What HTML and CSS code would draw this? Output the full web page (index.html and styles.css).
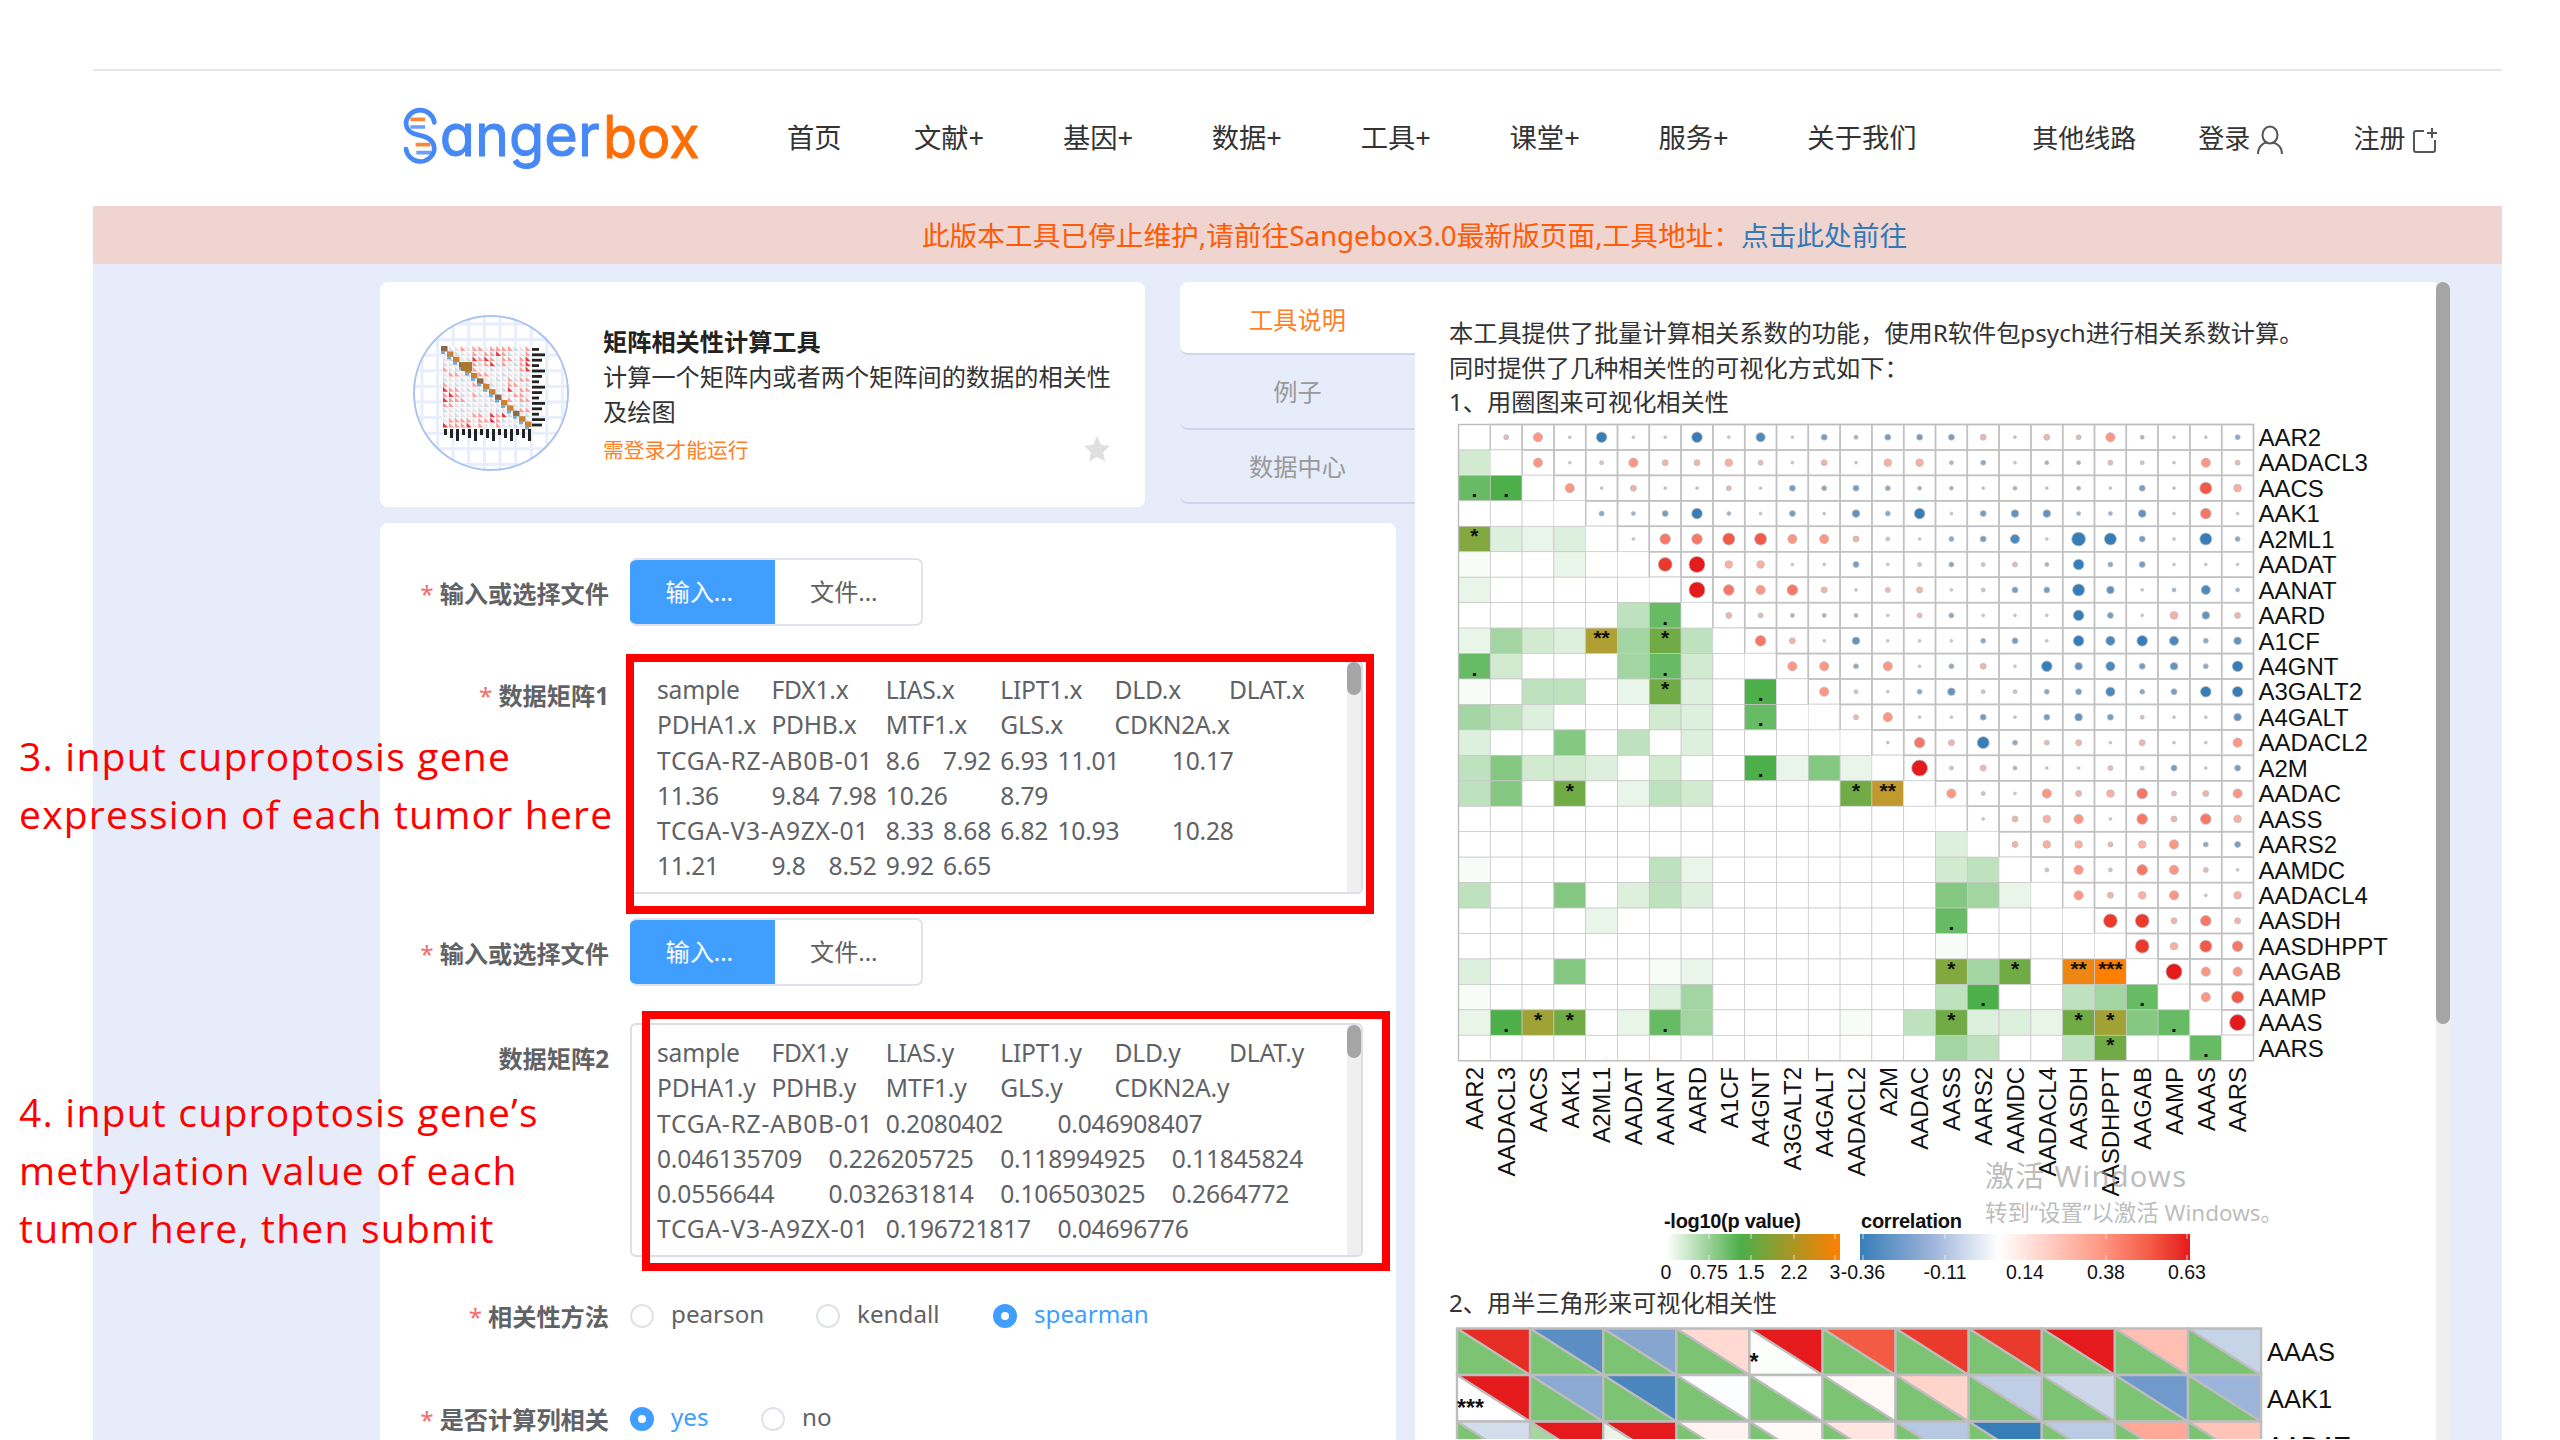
FILE: index.html
```html
<!DOCTYPE html>
<html lang="zh-CN">
<head>
<meta charset="utf-8">
<title>Sangerbox</title>
<link rel="stylesheet" href="styles.css">
</head>
<body>
<div class="page">
  <div class="site">
    <header class="header">
      <svg class="logo" viewBox="40 40 900 210" aria-label="Sangerbox">
        <g fill="none" stroke-width="11">
          <path stroke="#f98a3c" d="M62 89H106M78 165H122"/>
          <path stroke="#6f9ff5" d="M62 112H106M80 189H124"/>
        </g>
        <path class="logo-helix" d="M134 98A43 43 0 0 0 49 98C49 128 72 134 91 137C112 141 134 150 134 180A43 43 0 0 1 49 178"/>
        <text class="logo-blue" x="150" y="198" textLength="480" lengthAdjust="spacingAndGlyphs">anger</text>
        <text class="logo-orange" x="640" y="205" textLength="290" lengthAdjust="spacingAndGlyphs">box</text>
      </svg>
      <nav class="nav">
        <a>首页</a><a>文献+</a><a>基因+</a><a>数据+</a><a>工具+</a><a>课堂+</a><a>服务+</a><a>关于我们</a>
      </nav>
      <div class="account">
        <a>其他线路</a>
        <a>登录
          <svg class="ic" viewBox="0 0 28 30"><ellipse cx="14" cy="10" rx="7.5" ry="8.5"/><path d="M2 29C2 21 8 17.500 11 17.500M17 17.500C21 18.500 26 22 26 29"/></svg>
        </a>
        <a>注册
          <svg class="ic" viewBox="0 0 28 30"><path d="M13 6H5Q3 6 3 8V25Q3 27 5 27H22Q24 27 24 25V15M21 3V13M16 8H26"/></svg>
        </a>
      </div>
    </header>
    <div class="notice">此版本工具已停止维护,请前往Sangebox3.0最新版页面,工具地址：<a>点击此处前往</a></div>
    <main class="main">
      <section class="left">
        <div class="card tool">
          <svg class="tool-icon" id="tool-icon" viewBox="0 0 156 156"></svg>
          <div class="tool-info">
            <h1>矩阵相关性计算工具</h1>
            <p>计算一个矩阵内或者两个矩阵间的数据的相关性及绘图</p>
            <div class="tool-foot"><span>需登录才能运行</span>
              <svg class="star" viewBox="0 0 24 24"><path d="M12 0l3.600 8 8.400 1-6.200 5.900 1.600 8.600L12 19.300 4.600 23.500l1.600-8.600L0 9l8.400-1z"/></svg>
            </div>
          </div>
        </div>
        <form class="card form">
          <div class="row r-switch"><label class="req">输入或选择文件</label><div class="switch"><b>输入...</b><span>文件...</span></div></div>
          <div class="row r-area"><label class="req">数据矩阵1</label><div class="area"><pre>sample	FDX1.x	LIAS.x	LIPT1.x	DLD.x	DLAT.x
PDHA1.x	PDHB.x	MTF1.x	GLS.x	CDKN2A.x
<span class="id">TCGA-RZ-AB0B-01</span>	8.6	7.92	6.93	11.01	10.17
11.36	9.84	7.98	10.26	8.79
<span class="id">TCGA-V3-A9ZX-01</span>	8.33	8.68	6.82	10.93	10.28
11.21	9.8	8.52	9.92	6.65</pre><i class="bar"></i></div></div>
          <div class="row r-switch second"><label class="req">输入或选择文件</label><div class="switch"><b>输入...</b><span>文件...</span></div></div>
          <div class="row r-area"><label>数据矩阵2</label><div class="area"><pre>sample	FDX1.y	LIAS.y	LIPT1.y	DLD.y	DLAT.y
PDHA1.y	PDHB.y	MTF1.y	GLS.y	CDKN2A.y
<span class="id">TCGA-RZ-AB0B-01</span>	0.2080402	0.046908407
0.046135709	0.226205725	0.118994925	0.11845824
0.0556644	0.032631814	0.106503025	0.2664772
<span class="id">TCGA-V3-A9ZX-01</span>	0.196721817	0.04696776</pre><i class="bar"></i></div></div>
          <div class="row r-radio"><label class="req">相关性方法</label><div class="radios"><span class="w1">pearson</span><span class="w2">kendall</span><span class="on">spearman</span></div></div>
          <div class="row r-radio"><label class="req">是否计算列相关</label><div class="radios"><span class="w3 on">yes</span><span>no</span></div></div>
        </form>
      </section>
      <nav class="tabs"><a class="active">工具说明</a><a>例子</a><a>数据中心</a></nav>
      <article class="doc">
        <div class="doc-body">
          <p>本工具提供了批量计算相关系数的功能，使用R软件包psych进行相关系数计算。</p>
          <p>同时提供了几种相关性的可视化方式如下：</p>
          <p>1、用圈图来可视化相关性</p>
          <svg class="heat" id="heat" viewBox="1449 420 960 866"></svg>
          <p>2、用半三角形来可视化相关性</p>
          <svg class="tri" id="tri" viewBox="1449 1322 960 118"></svg>
        </div>
        <div class="scroll"><i></i></div>
      </article>
    </main>
  </div>
  <div class="frame frame-a"></div>
  <div class="frame frame-b"></div>
  <p class="note note-a"><span>3. input cuproptosis gene</span><br><span>expression of each tumor here</span></p>
  <p class="note note-b"><span>4. input cuproptosis gene’s</span><br><span>methylation value of each</span><br><span>tumor here, then submit</span></p>
  <div class="watermark"><div>激活 Windows</div><small>转到“设置”以激活 Windows。</small></div>
</div>
<script src="charts.js"></script>
</body>
</html>
```
FILE: styles.css
```css
*, *::before { box-sizing: border-box; }
body { margin: 0; background: #fff; font-family: "Noto Sans", "Noto Sans CJK SC", sans-serif; font-size: 24.2px; color: #333; }
p, h1, pre { margin: 0; }
.page { position: relative; width: 2560px; height: 1440px; overflow: hidden; padding: 69px 58px 0 93px; }
.site { height: 1371px; display: flex; flex-direction: column; }

.header { height: 137px; flex: none; border-top: 2px solid #e4e6ec; display: flex; align-items: flex-start; padding-left: 310px; }
.logo { width: 300px; height: 70px; margin-top: 32px; flex: none; overflow: visible; }
.logo-helix { fill: none; stroke: #4688f5; stroke-width: 14; stroke-linecap: round; }
.logo-blue, .logo-orange { font-family: Inter, "Noto Sans", sans-serif; font-feature-settings: "cv11"; font-size: 176px; stroke-linejoin: round; stroke-width: 3; }
.logo-blue { fill: #4688f5; stroke: #4688f5; }
.logo-orange { fill: #ff6d05; stroke: #ff6d05; }
.nav { display: grid; grid-template-columns: 127px repeat(6, 148.900px) 225px; margin: 45px 0 0 84px; line-height: 44px; font-size: 27.300px; white-space: nowrap; }
.account { display: flex; margin-top: 45px; line-height: 44px; font-size: 26px; white-space: nowrap; }
.account a { display: flex; align-items: center; gap: 6px; margin-right: 69px; }
.account a:first-child { margin-right: 62px; }
.ic { width: 28px; height: 30px; fill: none; stroke: #555; stroke-width: 2; margin-top: 4px; }

.notice { height: 58px; flex: none; background: #f0d4d0; color: #ff5a05; text-align: center; font-size: 27.700px; line-height: 59px; padding-left: 234px; }
.notice a { color: #337ab7; }

.main { flex: 1; background: #e6ecf9; padding: 18px 52px 0 287px; display: flex; align-items: flex-start; min-height: 0; }
.left { width: 1016px; margin-right: -216px; display: flex; flex-direction: column; gap: 16px; }
.card { background: #fff; border-radius: 8px; }
.tool { width: 765px; height: 225px; padding: 33px 32px 0 33px; display: flex; gap: 34px; }
.tool-icon { width: 156px; height: 156px; flex: none; }
.tool-info { width: 520px; padding-top: 9px; }
.tool h1 { font-size: 24.200px; line-height: 36px; color: #222; }
.tool p { line-height: 34.500px; }
.tool-foot { display: flex; justify-content: space-between; align-items: center; height: 40px; padding-right: 3px; font-size: 20.800px; color: #ff7f27; }
.star { width: 26px; height: 26px; fill: #e0e0e0; }

.form { height: 960px; padding: 35px 0 0 20px; }
.row { display: flex; align-items: flex-start; }
.row label { width: 209px; margin-right: 21px; flex: none; text-align: right; font-weight: 700; color: #606266; line-height: 72px; white-space: nowrap; }
.req::before { content: "*"; color: #f56c6c; margin-right: 6px; font-weight: 400; }
.r-switch { height: 102px; }
.r-switch.second { height: 105px; }
.r-area { height: 258px; }
.r-radio { height: 103px; }
.switch { display: flex; width: 293px; height: 68px; border: 1px solid #dfe2e8; border-width: 2px 2px 2px 0; border-radius: 7px; line-height: 64px; text-align: center; color: #606266; overflow: hidden; }
.switch > * { flex: 1; font-weight: 400; letter-spacing: -.1px; padding-right: 8px; }
.switch b { background: #409eff; color: #fff; margin: -2px 0; line-height: 68px; padding-right: 6px; }
.area { display: flex; justify-content: space-between; width: 733px; height: 234px; border: 2px solid #dcdfe6; border-radius: 6px; color: #606266; overflow: hidden; }
.area pre { font-family: "Noto Sans", "Noto Sans CJK SC", sans-serif; font-size: 24.600px; line-height: 35.300px; tab-size: 57.200px; padding: 10px 0 0 25px; letter-spacing: -.2px; }
.area .id { letter-spacing: .75px; }
.bar { width: 14px; background: #efefef; }
.bar::before { content: ""; display: block; height: 33px; border-radius: 7px; background: #a5a5a5; }
.radios { display: flex; line-height: 66px; color: #606266; }
.radios span { display: flex; align-items: center; }
.radios span::before { content: ""; width: 24px; height: 24px; border-radius: 50%; border: 2px solid #dfe2e8; margin-right: 17px; margin-top: 4px; }
.radios .on { color: #409eff; }
.radios .on::before { border: 8px solid #409eff; }
.w1 { width: 186px; }
.w2 { width: 177px; }
.w3 { width: 131px; }

.tabs { width: 235px; text-align: center; color: #999; position: relative; }
.tabs a { display: block; height: 74.500px; line-height: 74px; border-bottom: 2px solid #cdd6ea; border-bottom-left-radius: 8px; }
.tabs .active { background: #fff; color: #ff7f27; border-top-left-radius: 8px; height: 73px; line-height: 76px; }
.doc { width: 1035px; height: 1158px; background: #fff; display: flex; justify-content: space-between; overflow: hidden; border-top-right-radius: 6px; }
.doc-body { padding: 34px 0 0 34px; }
.doc p { line-height: 34.500px; white-space: nowrap; }
.doc svg { display: block; width: 960px; }
.doc .heat { height: 866px; }
.doc .tri { height: 118px; margin-top: 1px; }
.scroll { width: 14px; background: #efefef; }
.scroll i { display: block; height: 742px; background: #a5a5a5; border-radius: 7px; }
.doc svg text { font-family: "Liberation Sans", sans-serif; fill: #111; }

.frame { position: absolute; width: 748px; height: 260px; border: 8px solid #f00; }
.frame-a { left: 626px; top: 654px; }
.frame-b { left: 642px; top: 1011px; }
.note { position: absolute; left: 19px; color: #f00; font-family: "Open Sans", "Noto Sans", sans-serif; font-size: 39px; line-height: 58px; letter-spacing: 1.230px; white-space: nowrap; }
.note-a { top: 727px; }
.note-b { top: 1083px; }
.watermark { position: absolute; left: 1985px; top: 1154px; color: rgba(150, 150, 150, .65); font-size: 29px; line-height: 44px; white-space: nowrap; }
.watermark div { letter-spacing: 1.300px; }
.watermark small { display: block; font-size: 22.500px; line-height: 30px; }
```
FILE: charts.js
```js
const genes = ["AAR2","AADACL3","AACS","AAK1","A2ML1","AADAT","AANAT","AARD","A1CF","A4GNT","A3GALT2","A4GALT","AADACL2","A2M","AADAC","AASS","AARS2","AAMDC","AADACL4","AASDH","AASDHPPT","AAGAB","AAMP","AAAS","AARS"];

// Upper triangle: digits are positive correlations, letters a-h negative ones.
const upper = ["250f00f0e0caccc30325a00b","5015334203044ab0aa21052","5030020cbcbaa0a0a0c074","bacfa0c0dbf0cddaad060","0667755310bce0hgc0gb","894400c01b12afbc000","9656302301ccgd0aea","32aaa02b000fc04d3","630d000bc0fefebd","55b50b30fdecdbf","510bd11bcebcff","2500c0cdc100d","063gb2303005","913a0021c0c","5105346235","034506364","344245bc","1516520","534504","88363","8476","955","57","9",""];

// Lower triangle: digits are shades of green, letters the significant cells.
const lower = ["","4","89","000","B323","10020","200000","0000058","2643D6A5","840006840","105502A309","65300043080","300705030000","5744304009272","570A02540000AE","000000000000000","0000000000000003","10000052000000045","500703530000000762","0000200000000008000","00000000000000010000","300700120000000B6A0FG","1000003600000005900568","29CA02860000105A332AC78","00000000000000065005A008"];
const shade = [0, .04, .12, .19, .26, .36, .52, .69, .85, 1];
const sig = {A:["#70ab45","*"],B:["#83a840","*"],C:["#a1a236","*"],D:["#b0a034","**"],E:["#c09a2c","**"],F:["#ee8614","**"],G:["#ff7f00","***"]};
const radius = [1.4, 2, 2.5, 3, 3.8, 4.6, 5.3, 6, 6.9, 8];
const mix = (a, b, t) => "rgb(" + a.map((v, i) => Math.round(v + (b[i] - v) * t)).join() + ")";
const red = k => k === 9 ? "#e41a1c" : k > 4 ? mix([255,150,132],[235,58,44],(k-5)/3) : mix([205,200,200],[252,175,160],k/4);
const blue = k => mix([180,190,206],[55,126,184],Math.min(1,k/6));

const X = 1458.5, Y = 424.5, W = 31.8, H = 25.45;
let s = "";
for (let r = 0; r < 25; r++) {
  for (let c = 0; c < r; c++) {
    const k = lower[r][c], x = X + c*W, y = Y + r*H;
    const g = sig[k], t = g ? 0 : shade[+k];
    const fill = g ? g[0] : mix([255,255,255],[77,175,74],t);
    s += `<rect x="${x}" y="${y}" width="${W}" height="${H}" fill="${fill}" stroke="#c6c6c6" stroke-width=".7"/>`;
    const mark = g ? g[1] : +k > 7 ? "." : "";
    if (mark) s += `<text x="${x+W/2}" y="${y+(mark === "." ? 22 : 17)}" font-size="21" font-weight="700" text-anchor="middle">${mark}</text>`;
  }
  s += `<rect x="${X+r*W}" y="${Y+r*H}" width="${W}" height="${H}" fill="#fff" stroke="#ddd" stroke-width=".7"/>`;
  for (let c = r + 1; c < 25; c++) {
    const q = upper[r][c-r-1], neg = q >= "a", k = neg ? q.charCodeAt(0)-96 : +q;
    s += `<rect x="${X+c*W}" y="${Y+r*H}" width="${W}" height="${H}" fill="none" stroke="#c2c2c2" stroke-width="1.5"/>`;
    s += `<circle cx="${X+(c+.5)*W}" cy="${Y+(r+.5)*H}" r="${radius[k]}" fill="${neg ? blue(k) : red(k)}" stroke="#bbb" stroke-width=".8"/>`;
  }
  s += `<text x="2258.5" y="${Y+(r+.5)*H+8.7}" font-size="24">${genes[r]}</text>`;
  s += `<text transform="translate(${X+(r+.5)*W+8.7} 1067) rotate(-90)" font-size="24" text-anchor="end">${genes[r]}</text>`;
}
s += `<rect x="${X}" y="${Y}" width="${25*W}" height="${25*H}" fill="none" stroke="#bdbdbd" stroke-width="1.4"/>
<defs><linearGradient id="gp"><stop offset="0" stop-color="#fff"/><stop offset=".43" stop-color="#4daf4a"/><stop offset="1" stop-color="#ff7f00"/></linearGradient>
<linearGradient id="gc"><stop offset="0" stop-color="#377eb8"/><stop offset=".2" stop-color="#94aed7"/><stop offset=".42" stop-color="#fff"/><stop offset=".72" stop-color="#ff9c88"/><stop offset=".88" stop-color="#f45b45"/><stop offset="1" stop-color="#e41a1c"/></linearGradient></defs>
<text x="1664" y="1228" font-size="20" font-weight="700" textLength="137">-log10(p value)</text>
<text x="1861" y="1228" font-size="20" font-weight="700" textLength="101">correlation</text>
<rect x="1666" y="1234" width="174" height="26" fill="url(#gp)"/><rect x="1860" y="1234" width="330" height="26" fill="url(#gc)"/>`;
[[1666,"0"],[1709,"0.75"],[1751,"1.5"],[1794,"2.2"],[1835,"3"],[1863,"-0.36"],[1945,"-0.11"],[2025,"0.14"],[2106,"0.38"],[2187,"0.63"]].forEach(([x, t]) => {
  s += `<text x="${x}" y="1279" font-size="19.5" text-anchor="middle">${t}</text><path d="M${x} 1234v5M${x} 1255v5" stroke="#fff" opacity=".7"/>`;
});
document.getElementById("heat").innerHTML = s;

const rows = [
  ["AAAS", "e62d24 5b8ec4 86a6d0 ffdad3 e41a1c f45b45 ea3a2c ea3a2c e41a1c ffc0b3 c6d4e8"],
  ["AAK1", "e41a1c 8ba9d3 4a86bd fcfdff ffffff fffaf8 ffd4ca bfcde5 ccd8ea 6f9acb 9db5db"],
  ["AADAT", "d2ddec e41a1c e41a1c fff3f0 fffaf9 ffe4df b7c8e2 377eb8 bccbe4 ffa898 ffc3b8"]
];
const special = {"0-4":["#fafdfa","*"],"1-0":["#fff","***"],"2-1":["#a5d6a0",""],"2-2":["#eaf5e8",""]};
let t = "";
rows.forEach(([name, cols], r) => {
  cols.split(" ").forEach((col, c) => {
    const w = 73.1, h = 46.5, x = 1457 + c*w, y = 1329.5 + r*h, sp = special[r+"-"+c];
    t += `<path d="M${x} ${y}V${y+h}H${x+w}z" fill="${sp ? sp[0] : "#7cc374"}"/><path d="M${x} ${y}H${x+w}V${y+h}z" fill="#${col}"/><path d="M${x} ${y}L${x+w} ${y+h}M${x} ${y}h${w}v${h}h-${w}z" fill="none" stroke="#bdbdbd" stroke-width="2.4"/>`;
    if (sp && sp[1]) t += `<text x="${x}" y="${y+41}" font-size="23" font-weight="700">${sp[1]}</text>`;
  });
  t += `<text x="2267" y="${1362+r*46.8}" font-size="25.5">${name}</text>`;
});
document.getElementById("tri").innerHTML = t;

// Thumbnail of a correlation matrix inside a round badge.
let m = `<defs><clipPath id="disc"><circle cx="78" cy="78" r="77"/></clipPath></defs><circle cx="78" cy="78" r="77" fill="#fff"/><g clip-path="url(#disc)" stroke="#e8eefb" stroke-width="3">`;
for (let i = 9; i < 156; i += 15.6) m += `<path d="M${i} 0V156M0 ${i}H156"/>`;
m += `</g><rect x="29" y="31" width="90" height="82" fill="#fbf9f9"/>`;
const reds = ["000101101111001","000001011210001","000002121011012","000001012010012","100001000000012","011000110000000","000000000001011","100001010001100","211000000002011","121001000000110","211100000001011","110000000000000","000000000000011","000001102120000","011110112100000","211120100100000"];
for (let r = 0; r < 16; r++) for (let c = 0; c < 15; c++) {
  const v = +reds[r][c], x = 30 + c*5.9, y = 31 + r*5.1;
  if (v) m += `<path d="M${x} ${y}l5 5h-5z" fill="${v === 2 ? "#e33a40" : "#f5a09c"}"/>`;
  else m += `<path d="M${x} ${y}l5 5h-5z" fill="${(r+c)%3 ? "#e6e4ea" : "#cbdcec"}"/>`;
}
for (let i = 0; i < 15; i++) m += `<rect x="${28+i*6}" y="${31+i*5.4}" width="6.500" height="5.500" fill="${i%3 ? "#cb8130" : "#8a6a48"}"/><rect x="${28+i*6}" y="${36+i*5.4}" width="4" height="3" fill="#77acd4"/><rect x="${119}" y="${33+i*5.4}" width="${7+(i*5%3)*3}" height="2.800" fill="#222"/><rect x="${31+i*6}" y="114" width="3" height="${6+(i*7%3)*3}" fill="#222"/>`;
m += `<path d="M48 47h11v9h-11z" fill="#a8792f"/><circle cx="78" cy="78" r="77" fill="none" stroke="#aac3ef" stroke-width="2"/>`;
document.getElementById("tool-icon").innerHTML = m;
```
